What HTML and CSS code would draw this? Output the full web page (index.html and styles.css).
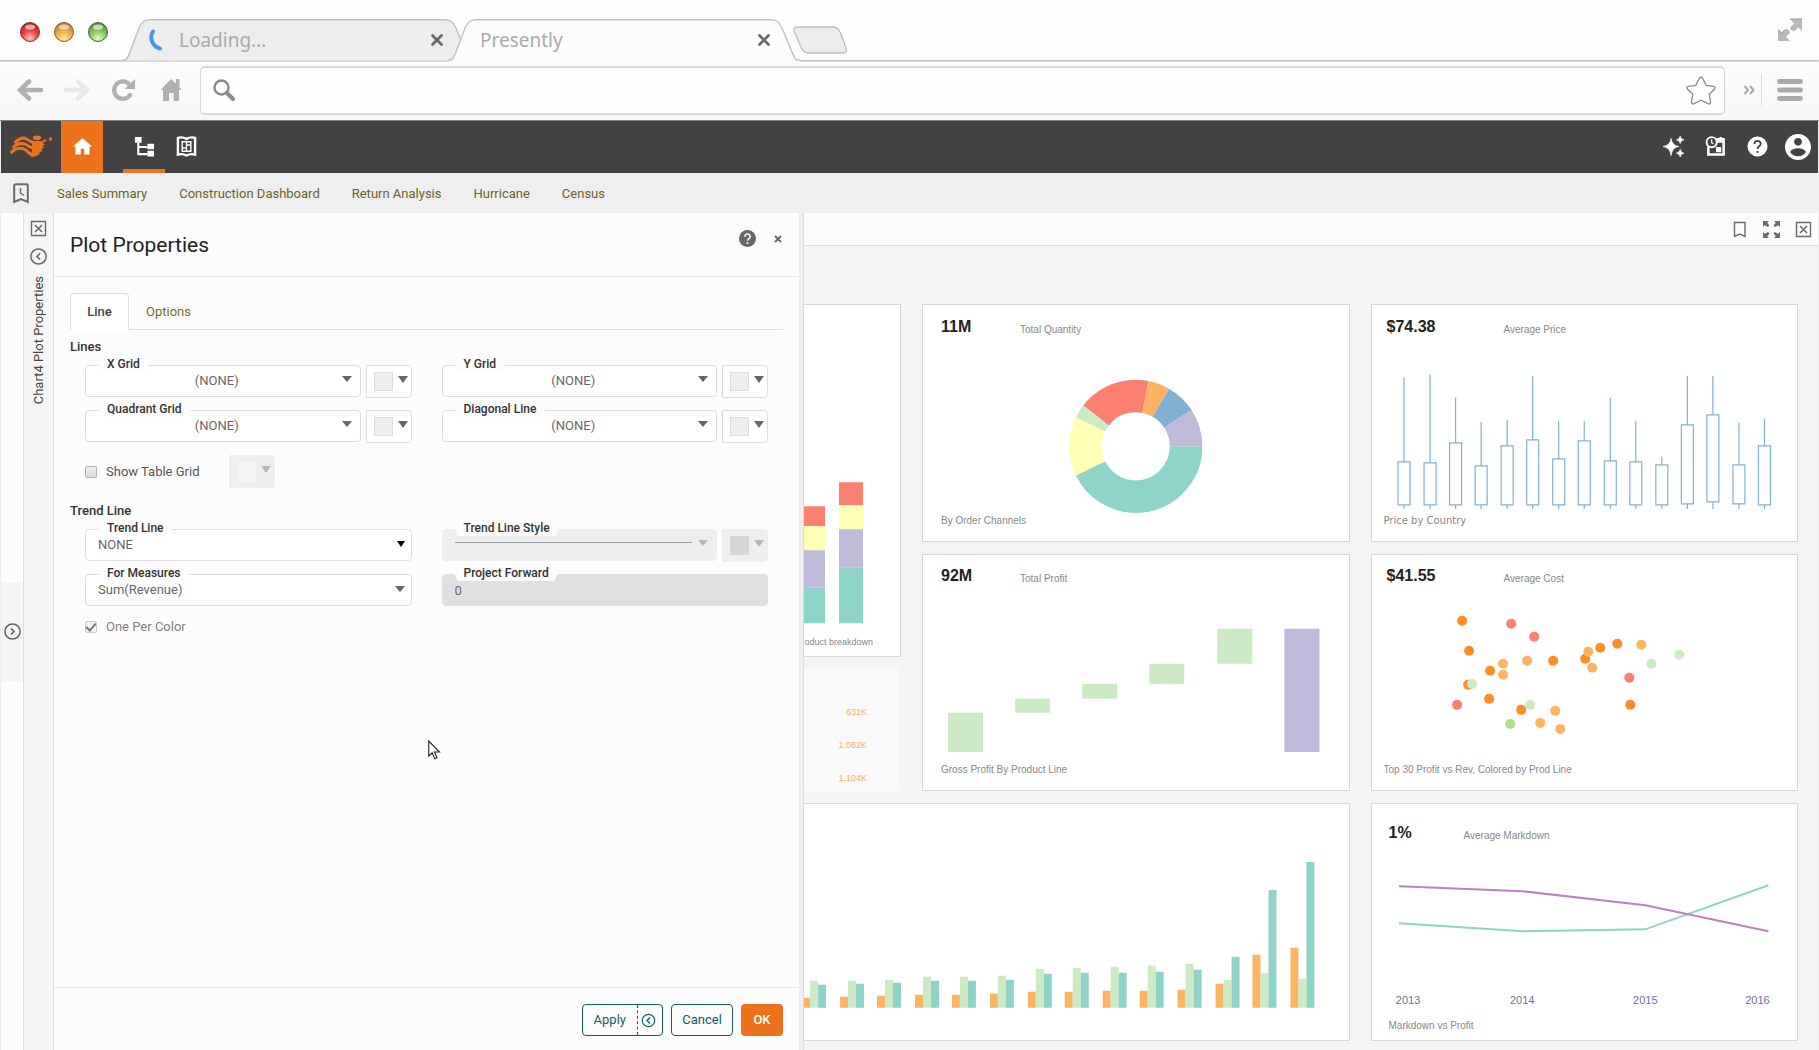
FILE: index.html
```html
<!DOCTYPE html>
<html lang="en">
<head>
<meta charset="utf-8">
<meta name="viewport" content="width=device-width, initial-scale=1">
<title>Presently</title>
<link rel="stylesheet" href="styles.css">
</head>
<body>
<div class="window">
  <header class="tabstrip">
    <div class="lights">
      <svg class="light" viewBox="0 0 20 20"><defs><radialGradient id="red" cx=".5" cy=".85" r=".8"><stop offset="0" stop-color="#ffc4bd"/><stop offset=".5" stop-color="#ee4a47"/><stop offset="1" stop-color="#b01c20"/></radialGradient></defs><circle cx="10" cy="10" r="9.5" fill="url(#red)" stroke="#7c3634"/><ellipse cx="10" cy="5" rx="5" ry="2.6" fill="#fff" opacity=".6"/></svg>
      <svg class="light" viewBox="0 0 20 20"><defs><radialGradient id="amber" cx=".5" cy=".85" r=".8"><stop offset="0" stop-color="#ffe9a6"/><stop offset=".5" stop-color="#f2b04e"/><stop offset="1" stop-color="#c07a20"/></radialGradient></defs><circle cx="10" cy="10" r="9.5" fill="url(#amber)" stroke="#8a6030"/><ellipse cx="10" cy="5" rx="5" ry="2.6" fill="#fff" opacity=".6"/></svg>
      <svg class="light" viewBox="0 0 20 20"><defs><radialGradient id="green" cx=".5" cy=".85" r=".8"><stop offset="0" stop-color="#dcffb8"/><stop offset=".5" stop-color="#8ccb62"/><stop offset="1" stop-color="#4c8c34"/></radialGradient></defs><circle cx="10" cy="10" r="9.5" fill="url(#green)" stroke="#46653a"/><ellipse cx="10" cy="5" rx="5" ry="2.6" fill="#fff" opacity=".6"/></svg>
    </div>
    <div class="browser-tab">
      <svg class="tab-shape" viewBox="0 0 352 43"><path d="M0 41.5C5 41.5 6 38 8 33L17 9C20 2 23 .7 29 .7H322C328 .7 331 2 334 9L344 33C346 38 347 41.5 352 41.5" fill="#ededed" stroke="#c0c0c0" stroke-width="1.4"/></svg>
      <svg class="spinner" viewBox="0 0 16 24"><path d="M5 3.500C1 10 4.500 18.500 12 20.500" fill="none" stroke="#4a96e6" stroke-width="4" stroke-linecap="round"/></svg>
      <span class="tab-title">Loading...</span>
      <button class="tab-close" aria-label="Close tab"><svg viewBox="0 0 12 12"><path d="M1.500 1.500l9 9m0-9l-9 9" stroke="#666" stroke-width="2.600" stroke-linecap="round"/></svg></button>
    </div>
    <div class="browser-tab current">
      <svg class="tab-shape" viewBox="0 0 352 43"><path d="M0 41.5C5 41.5 6 38 8 33L17 9C20 2 23 .7 29 .7H322C328 .7 331 2 334 9L344 33C346 38 347 41.5 352 41.5V43H0z" fill="#fcfcfc"/><path d="M0 41.5C5 41.5 6 38 8 33L17 9C20 2 23 .7 29 .7H322C328 .7 331 2 334 9L344 33C346 38 347 41.5 352 41.5" fill="none" stroke="#c0c0c0" stroke-width="1.4"/></svg>
      <span class="tab-title">Presently</span>
      <button class="tab-close" aria-label="Close tab"><svg viewBox="0 0 12 12"><path d="M1.500 1.500l9 9m0-9l-9 9" stroke="#666" stroke-width="2.600" stroke-linecap="round"/></svg></button>
    </div>
    <button class="new-tab" aria-label="New tab"><svg viewBox="0 0 54 28"><path d="M5 1H40C45 1 46 4 48 8L53 22C54 25 53 27 50 27H16C11 27 9 24 8 21L1 5C0 2 2 1 5 1Z" fill="#ededed" stroke="#bdbdbd" stroke-width="1.300"/></svg></button>
    <svg class="expand" viewBox="0 0 24 24"><path d="M13 1H24V13L20.500 9.500L16.500 13C14 13 12 11.500 12 9.500L16 5.500L12 1ZM11 23H0V11L3.500 14.500L7.500 11C10 11 12 12.500 12 15L8 18.500L12 23Z" fill="#b9b9b9"/><path d="M12 1H24M0 11.500L3.500 15L7.500 11.500" stroke="#999" fill="none"/></svg>
  </header>

  <div class="toolbar">
    <button class="tool" aria-label="Back"><svg viewBox="0 0 26 22"><path d="M24 11H4M12 2.500L3 11L12 19.500" fill="none" stroke="#b0b0b0" stroke-width="4.600" stroke-linecap="round"/></svg></button>
    <button class="tool" aria-label="Forward"><svg viewBox="0 0 26 22"><path d="M2 11H22M14 2.500L23 11L14 19.500" fill="none" stroke="#e8e8e8" stroke-width="4.600" stroke-linecap="round"/></svg></button>
    <button class="tool" aria-label="Reload"><svg viewBox="0 0 26 22"><path d="M19 16A8.700 8.700 0 1 1 18 5" fill="none" stroke="#b0b0b0" stroke-width="4.200" stroke-linecap="round"/><path d="M24 0V10H13.500Z" fill="#b0b0b0"/></svg></button>
    <button class="tool" aria-label="Home"><svg viewBox="0 0 26 22"><path d="M13 0L18 4.500V0H21.500V8L23.500 11H21V22H15.500V14H11V22H5V11H2.500Z" fill="#b0b0b0"/></svg></button>
    <div class="address">
      <svg class="search-icon" viewBox="0 0 22 22"><circle cx="8.500" cy="8.500" r="7" fill="none" stroke="#8a8a8a" stroke-width="2.400"/><path d="M14 14L20 20" stroke="#8a8a8a" stroke-width="4" stroke-linecap="round"/></svg>
      <input type="text" class="address-input" aria-label="Address">
      <button class="star" aria-label="Bookmark page"><svg viewBox="0 0 30 29"><path d="M13.200 2.500Q15 -.5 16.800 2.500L20.200 9.300L27.500 10.400Q30.200 11.200 28.400 13.200L23.200 18.200L24.500 25.500Q24.600 28.800 21.800 27.700L15 24.200L8.200 27.700Q5.400 28.800 5.500 25.500L6.800 18.200L1.600 13.200Q-.2 11.200 2.500 10.400L9.800 9.300Z" fill="#fff" stroke="#8a8a8a" stroke-width="1.300"/></svg></button>
    </div>
    <button class="more" aria-label="More"><svg viewBox="0 0 12 10"><path d="M1.500 1L5 5L1.500 9M7 1L10.500 5L7 9" fill="none" stroke="#aaa" stroke-width="2"/></svg></button>
    <button class="menu" aria-label="Menu"><svg viewBox="0 0 26 22"><path d="M2.500 2.500H23.500M2.500 11H23.500M2.500 19.500H23.500" stroke="#a9a9a9" stroke-width="4.800" stroke-linecap="round"/></svg></button>
  </div>

  <div class="app">
    <nav class="navbar">
      <svg class="logo" viewBox="0 0 42 22"><g fill="#ee711c"><ellipse cx="27" cy="2.700" rx="4.200" ry="2.300"/><circle cx="40.500" cy="4" r="1.700"/><path d="M36 4L31 6.500Q27 5 23 7L22 10V18L21 22Q27 21.500 30 18.500L29 17L32 16.500L31.500 13.500H34L33 11L35 9L32.500 8.500L36.500 5.500Z"/></g><path d="M4.500 8C9 3.500 13 2 16.500 4C20 6 21 8 26 8M2.500 13C7 8.500 12 7.500 16 9.500C19.500 11.500 21 14 26 13M.5 18C6 12.500 11 12.500 15 14.500C18.500 16.500 19 20 25 20" fill="none" stroke="#ee711c" stroke-width="3"/></svg>
      <a class="nav-item home" href="#" aria-label="Home"><svg viewBox="0 0 24 24"><path d="M10 21v-6.500h4V21h6v-9h3L12 2.500 1 12h3v9z" fill="#fff"/></svg></a>
      <a class="nav-item active" href="#" aria-label="Explorer"><svg viewBox="0 0 22 22"><path d="M1 1h7v6H1zM14 8h7v6h-7zM14 15.500h7v6h-7z" fill="#fff"/><path d="M4.500 7v12H14M4.500 11.500H14" fill="none" stroke="#fff" stroke-width="2.200"/></svg></a>
      <a class="nav-item" href="#" aria-label="Portal"><svg viewBox="0 0 22 22"><path d="M2 2Q6.500 .5 11 3Q15.500 .5 20 2V19.500Q15.500 18 11 20.500Q6.500 18 2 19.500Z" fill="none" stroke="#fff" stroke-width="2.500"/><path d="M6.500 6H15.500V16H6.500ZM11 5.500V16.500M6.500 12.500H11M11 9.500H15.500" fill="none" stroke="#fff" stroke-width="1.500"/></svg></a>
      <div class="nav-right">
        <a class="nav-item" href="#" aria-label="Assistant"><svg viewBox="0 0 22 22"><path d="M8.500 2.500Q9.500 10 16.500 11Q9.500 12 8.500 20.500Q7.500 12 0 11Q7.500 10 8.500 2.500ZM18 0Q18.500 3.500 22 4Q18.500 4.500 18 8Q17.500 4.500 14 4Q17.500 3.500 18 0ZM18 14Q18.500 17.500 22 18Q18.500 18.500 18 22Q17.500 18.500 14 18Q17.500 17.500 18 14Z" fill="#fff" stroke="#fff" stroke-width=".7"/></svg></a>
        <a class="nav-item" href="#" aria-label="Schedule"><svg viewBox="0 0 22 22"><path d="M3.500 11V19.500H19.500V3.500H11M16.500 1V5" fill="none" stroke="#fff" stroke-width="2.600"/><path d="M12 3H20V7H12ZM11.500 11.500H17V17H11.500Z" fill="#fff"/><circle cx="7" cy="6.500" r="5.300" fill="#424242" stroke="#fff" stroke-width="2"/><path d="M7 3.500V7L9 8.500" fill="none" stroke="#fff" stroke-width="1.300"/></svg></a>
        <a class="nav-item" href="#" aria-label="Help"><svg viewBox="0 0 22 22"><circle cx="11" cy="11" r="10.500" fill="#fff"/><path d="M7.800 8.300C7.800 4 14.300 4 14.300 8.300C14.300 10.800 11 10.800 11 13.600" fill="none" stroke="#424242" stroke-width="1.900"/><path d="M10 15.700h2v2h-2z" fill="#424242"/></svg></a>
        <a class="nav-item user" href="#" aria-label="Account"><svg viewBox="2 2 20 20"><path d="M12 2C6.500 2 2 6.500 2 12s4.500 10 10 10 10-4.500 10-10S17.500 2 12 2zm0 3c1.700 0 3 1.300 3 3s-1.300 3-3 3-3-1.300-3-3 1.300-3 3-3zm0 14.200c-2.500 0-4.700-1.300-6-3.200 0-2 4-3.100 6-3.100s6 1.100 6 3.100c-1.300 1.900-3.500 3.200-6 3.200z" fill="#fff"/></svg></a>
      </div>
    </nav>

    <nav class="bookmarks">
      <svg class="history" viewBox="0 0 16 21"><path d="M1.200 2.500Q1.200 1.200 2.500 1.200H13.500Q14.800 1.200 14.800 2.500V19L8 16.200L1.200 19Z" fill="none" stroke="#6a6a6a" stroke-width="2"/><path d="M7.500 5V10L11 12.500" fill="none" stroke="#6a6a6a" stroke-width="1.500"/></svg>
      <a href="#">Sales Summary</a>
      <a href="#">Construction Dashboard</a>
      <a href="#">Return Analysis</a>
      <a href="#">Hurricane</a>
      <a href="#">Census</a>
    </nav>

    <main class="workspace">
      <aside class="rail">
        <button class="rail-handle" aria-label="Expand"><svg viewBox="0 0 17 17"><circle cx="8.500" cy="8.500" r="7.600" fill="none" stroke="#666" stroke-width="1.500"/><path d="M7 5.500L10 8.500L7 11.500" fill="none" stroke="#666" stroke-width="1.700"/></svg></button>
      </aside>
      <aside class="dock">
        <button class="dock-btn" aria-label="Close"><svg viewBox="0 0 17 17"><path d="M1.500 1.500H15.500V15.500H1.500Z" fill="none" stroke="#6a6a6a" stroke-width="1.400"/><path d="M5 5L12 12M12 5L5 12" stroke="#6a6a6a" stroke-width="1.600"/></svg></button>
        <button class="dock-btn" aria-label="Collapse"><svg viewBox="0 0 17 17"><circle cx="8.500" cy="8.500" r="7.600" fill="none" stroke="#6a6a6a" stroke-width="1.500"/><path d="M10 5.500L7 8.500L10 11.500" fill="none" stroke="#6a6a6a" stroke-width="1.700"/></svg></button>
        <span class="dock-title">Chart4 Plot Properties</span>
      </aside>

      <section class="panel">
        <div class="panel-head">
          <h1>Plot Properties</h1>
          <button class="help" aria-label="Help"><svg viewBox="0 0 17 17"><circle cx="8.500" cy="8.500" r="8.500" fill="#666"/><path d="M5.900 6.700C5.900 3 11.200 3 11.200 6.700C11.200 8.500 8.500 8.600 8.500 10.800" fill="none" stroke="#fff" stroke-width="1.600"/><path d="M7.600 12.200h1.800v1.800H7.600z" fill="#fff"/></svg></button>
          <button class="close" aria-label="Close"><svg viewBox="0 0 8 8"><path d="M1 1L7 7M7 1L1 7" stroke="#666" stroke-width="1.800"/></svg></button>
        </div>
        <div class="panel-body">
          <div class="tabs">
            <button class="tab selected">Line</button>
            <button class="tab">Options</button>
          </div>

          <h2>Lines</h2>
          <div class="fields">
            <div class="pair">
              <div class="field centered"><label for="xgrid">X Grid</label><select id="xgrid"><option>(NONE)</option></select></div>
              <button class="color" aria-label="X grid color"><i class="swatch"></i></button>
            </div>
            <div class="pair">
              <div class="field centered"><label for="ygrid">Y Grid</label><select id="ygrid"><option>(NONE)</option></select></div>
              <button class="color" aria-label="Y grid color"><i class="swatch"></i></button>
            </div>
            <div class="pair">
              <div class="field centered"><label for="quadrant">Quadrant Grid</label><select id="quadrant"><option>(NONE)</option></select></div>
              <button class="color" aria-label="Quadrant grid color"><i class="swatch"></i></button>
            </div>
            <div class="pair">
              <div class="field centered"><label for="diagonal">Diagonal Line</label><select id="diagonal"><option>(NONE)</option></select></div>
              <button class="color" aria-label="Diagonal line color"><i class="swatch"></i></button>
            </div>
            <div class="pair">
              <label class="check"><input type="checkbox">Show Table Grid</label>
              <button class="color off" disabled aria-label="Table grid color"><i class="swatch"></i></button>
            </div>
          </div>

          <h2>Trend Line</h2>
          <div class="fields">
            <div class="field native"><label for="trend">Trend Line</label><select id="trend"><option>NONE</option></select></div>
            <div class="pair">
              <div class="field off"><label for="style">Trend Line Style</label><select id="style" disabled><option aria-label="Solid"></option></select><span class="stroke-sample"></span></div>
              <button class="color off dark" disabled aria-label="Trend line color"><i class="swatch"></i></button>
            </div>
            <div class="field"><label for="measures">For Measures</label><select id="measures"><option>Sum(Revenue)</option></select></div>
            <div class="field off plain"><label for="forward">Project Forward</label><input type="text" id="forward" value="0" disabled></div>
            <label class="check muted"><input type="checkbox" checked disabled>One Per Color</label>
          </div>
        </div>
        <footer class="panel-foot">
          <div class="split">
            <button class="btn">Apply</button>
            <button class="btn btn-icon" aria-label="Apply and collapse"><svg viewBox="0 0 17 17"><circle cx="8.500" cy="8.500" r="6.200" fill="none" stroke="#15605c" stroke-width="1.200"/><path d="M10 5.500L7 8.500L10 11.500" fill="none" stroke="#15605c" stroke-width="1.400"/></svg></button>
          </div>
          <button class="btn outlined">Cancel</button>
          <button class="btn primary">OK</button>
        </footer>
      </section>

      <section class="dash">
        <div class="dash-head">
          <button aria-label="Bookmark"><svg viewBox="0 0 17 17"><path d="M3.500 1.500H14V15.500L8.700 13L3.500 15.500Z" fill="none" stroke="#6a6a6a" stroke-width="1.400"/></svg></button>
          <button aria-label="Full screen"><svg viewBox="0 0 17 17"><path d="M0 0H6L4.200 1.800L6.500 4.500L5 6L1.800 4.200L0 6ZM17 0V6L15.200 4.200L12 6L10.500 4.500L12.800 1.800L11 0ZM0 17V11L1.800 12.800L5 11L6.500 12.500L4.200 15.200L6 17ZM17 17H11L12.800 15.200L10.500 12.500L12 11L15.200 12.800L17 11Z" fill="#6a6a6a"/></svg></button>
          <button aria-label="Close"><svg viewBox="0 0 17 17"><path d="M1.500 1.500H15.500V15.500H1.500Z" fill="none" stroke="#6a6a6a" stroke-width="1.400"/><path d="M5 5L12 12M12 5L5 12" stroke="#6a6a6a" stroke-width="1.600"/></svg></button>
        </div>
        <div class="cards">
          <div class="side">
            <article class="card cut stacked">
              <svg class="plot" viewBox="0 0 96 331">
                <path d="M0 201H21V221H0ZM35 177H59V200H35Z" fill="#fb8072"/>
                <path d="M0 221H21V245H0ZM35 200H59V224H35Z" fill="#ffffb3"/>
                <path d="M0 245H21V282H0ZM35 224H59V262H35Z" fill="#bebada"/>
                <path d="M0 282H21V318H0ZM35 262H59V318H35Z" fill="#8dd3c7"/>
              </svg>
              <p class="caption">Product breakdown</p>
            </article>
            <table class="totals">
              <tr><td>631K</td></tr>
              <tr><td>1,062K</td></tr>
              <tr><td>1,104K</td></tr>
            </table>
          </div>

          <article class="card">
            <div class="kpi"><strong>11M</strong><span>Total Quantity</span></div>
            <svg class="plot" viewBox="0 0 425 159">
              <g fill="none" stroke-width="32.500">
                <circle cx="212.500" cy="91.500" r="50.250" pathLength="360" stroke="#8dd3c7" stroke-dasharray="154 360"/>
                <circle cx="212.500" cy="91.500" r="50.250" pathLength="360" stroke="#ffffb3" stroke-dasharray="52 360" stroke-dashoffset="-154"/>
                <circle cx="212.500" cy="91.500" r="50.250" pathLength="360" stroke="#ccebc5" stroke-dasharray="12 360" stroke-dashoffset="-206"/>
                <circle cx="212.500" cy="91.500" r="50.250" pathLength="360" stroke="#fb8072" stroke-dasharray="63 360" stroke-dashoffset="-218"/>
                <circle cx="212.500" cy="91.500" r="50.250" pathLength="360" stroke="#fdb462" stroke-dasharray="19 360" stroke-dashoffset="-281"/>
                <circle cx="212.500" cy="91.500" r="50.250" pathLength="360" stroke="#80b1d3" stroke-dasharray="27 360" stroke-dashoffset="-300"/>
                <circle cx="212.500" cy="91.500" r="50.250" pathLength="360" stroke="#bebada" stroke-dasharray="33 360" stroke-dashoffset="-327"/>
              </g>
            </svg>
            <p class="caption">By Order Channels</p>
          </article>

          <article class="card right">
            <div class="kpi"><strong>$74.38</strong><span>Average Price</span></div>
            <svg class="plot" viewBox="0 0 425 159">
              <path fill="none" stroke="#80b1d3" stroke-width="1.200" d="M32 23V107M26 107h12V150h-12ZM32 150v4M58 20V108M52 108h12V150h-12ZM58 150v4M83.500 43V88M77.500 88h12V150h-12ZM83.500 150v4M109 67V111M103 111h12V150h-12ZM109 150v4M135 65V91M129 91h12V150h-12ZM135 150v4M160.500 21V85M154.500 85h12V150h-12ZM160.500 150v4M186.500 66V104M180.500 104h12V150h-12ZM186.500 150v4M212 66V86M206 86h12V150h-12ZM212 150v4M238 43V106M232 106h12V150h-12ZM238 150v4M263.500 66V107M257.500 107h12V150h-12ZM263.500 150v4M289.500 102V110M283.500 110h12V150h-12ZM289.500 150v4M315 21V70M309 70h12V149h-12ZM315 149v5M340.500 21V60M334.500 60h12V147h-12ZM340.500 147v7M366.500 68V110M360.500 110h12V149h-12ZM366.500 149v5M392 64V91M386 91h12V150h-12ZM392 150v4"/>
            </svg>
            <p class="caption wide">Price by Country</p>
          </article>

          <article class="card">
            <div class="kpi"><strong>92M</strong><span>Total Profit</span></div>
            <svg class="plot" viewBox="0 0 425 159">
              <path fill="#ccebc5" d="M25 108h35v39h-35zM92 94h35v14h-35zM159 79h35v15h-35zM226 59h35v20h-35zM294 24h35v35h-35z"/>
              <path fill="#bebada" d="M361 24h35v123h-35z"/>
            </svg>
            <p class="caption">Gross Profit By Product Line</p>
          </article>

          <article class="card right">
            <div class="kpi"><strong>$41.55</strong><span>Average Cost</span></div>
            <svg class="plot" viewBox="0 0 425 159">
              <g fill="#fd8d26"><circle cx="90" cy="16" r="5"/><circle cx="97" cy="46" r="5"/><circle cx="118" cy="66" r="5"/><circle cx="181" cy="56" r="5"/><circle cx="213" cy="54" r="5"/><circle cx="228" cy="43" r="5"/><circle cx="245" cy="39" r="5"/><circle cx="258" cy="100" r="5"/><circle cx="96" cy="80" r="5"/><circle cx="117" cy="94" r="5"/><circle cx="149" cy="105" r="5"/></g>
              <g fill="#fdb462"><circle cx="131" cy="59" r="5"/><circle cx="131" cy="70" r="5"/><circle cx="155" cy="56" r="5"/><circle cx="216" cy="47" r="5"/><circle cx="220" cy="63" r="5"/><circle cx="269" cy="40" r="5"/><circle cx="183" cy="106" r="5"/><circle cx="168" cy="118" r="5"/><circle cx="188" cy="124" r="5"/></g>
              <g fill="#fb8072"><circle cx="139" cy="19" r="5"/><circle cx="162" cy="32" r="5"/><circle cx="257" cy="73" r="5"/><circle cx="85" cy="100" r="5"/></g>
              <g fill="#ccebc5"><circle cx="307" cy="50" r="5"/><circle cx="279" cy="59" r="5"/><circle cx="100" cy="79" r="5"/><circle cx="158" cy="100" r="5"/></g>
              <circle cx="138" cy="119" r="5" fill="#b3de8e"/>
            </svg>
            <p class="caption">Top 30 Profit vs Rev, Colored by Prod Line</p>
          </article>

          <article class="card cut bars">
            <svg class="plot" viewBox="0 0 545 236">
              <path fill="#fdb462" d="M-2 204v-10h8v10zM36 204v-11h8v11zM73 204v-12h8v12zM111 204v-13h8v13zM148 204v-13h8v13zM186 204v-14h8v14zM224 204v-16h8v16zM261 204v-16h8v16zM299 204v-17h8v17zM336 204v-17h8v17zM374 204v-18h8v18zM412 204v-24h8v24zM449 204v-53h8v53zM487 204v-60h8v60z"/>
              <path fill="#ccebc5" d="M6 204v-27h8v27zM44 204v-27h8v27zM81 204v-28h8v28zM119 204v-31h8v31zM156 204v-31h8v31zM194 204v-32h8v32zM232 204v-39h8v39zM269 204v-40h8v40zM307 204v-41h8v41zM344 204v-42h8v42zM382 204v-44h8v44zM420 204v-28h8v28zM457 204v-35h8v35zM495 204v-29h8v29z"/>
              <path fill="#8dd3c7" d="M14 204v-23h8v23zM52 204v-24h8v24zM89 204v-25h8v25zM127 204v-27h8v27zM164 204v-27h8v27zM202 204v-28h8v28zM240 204v-34h8v34zM277 204v-35h8v35zM315 204v-35h8v35zM352 204v-36h8v36zM390 204v-38h8v38zM428 204v-51h8v51zM465 204v-118h8v118zM503 204v-146h8v146z"/>
            </svg>
          </article>

          <article class="card right low">
            <div class="kpi"><strong>1%</strong><span>Average Markdown</span></div>
            <svg class="plot" viewBox="0 0 425 166">
              <polyline points="27,70 151,78 273,76 396,32" fill="none" stroke="#8dd3c7" stroke-width="2"/>
              <polyline points="27,33 151,38 273,52 396,78" fill="none" stroke="#bc80bd" stroke-width="2"/>
              <g class="axis"><text x="36" y="151">2013</text><text x="150" y="151">2014</text><text x="273" y="151">2015</text><text x="385" y="151">2016</text></g>
            </svg>
            <p class="caption">Markdown vs Profit</p>
          </article>
        </div>
      </section>
    </main>
  </div>
  <svg class="cursor" viewBox="0 0 13 20"><path d="M.7 1V16L4.200 12.800L6.700 18.700L9 17.700L6.500 12H11.500Z" fill="#fff" stroke="#222" stroke-width="1.100"/></svg>
</div>
</body>
</html>
```
FILE: styles.css
```css
* { box-sizing: border-box; }

body {
  margin: 0;
  background: #fff;
  color: #666;
  font: 13px/18px Roboto, "Liberation Sans", sans-serif;
}

button {
  display: flex;
  align-items: center;
  justify-content: center;
  margin: 0;
  padding: 0;
  border: 0;
  background: none;
  color: inherit;
  font: inherit;
}

svg { display: block; }
a { text-decoration: none; }
h1, h2, p { margin: 0; }

.window {
  display: flex;
  flex-direction: column;
  min-height: 100vh;
  position: relative;
}

/* Browser tab strip */
.tabstrip {
  display: flex;
  align-items: flex-end;
  height: 62px;
  padding-left: 20px;
  background: linear-gradient(#c6c6c6, #dcdcdc) bottom / 100% 2px no-repeat #fefefe;
}

.lights {
  display: flex;
  gap: 14px;
  width: 102px;
  padding-bottom: 20px;
}

.light { width: 20px; height: 20px; }

.browser-tab {
  display: flex;
  align-items: center;
  position: relative;
  width: 352px;
  height: 43px;
  padding: 0 31px 2px 26px;
}

.browser-tab.current {
  z-index: 1;
  margin-left: -26px;
  padding: 0 30px 2px 32px;
}

.tab-shape { position: absolute; inset: 0; width: 100%; height: 100%; }
.spinner { position: relative; width: 16px; height: 24px; margin-right: 15px; }

.tab-title {
  position: relative;
  flex: 1;
  color: #aaa;
  font: 19px/24px "Noto Sans", "Open Sans", sans-serif;
}

.tab-close { position: relative; width: 12px; height: 12px; }
.tab-close svg { width: 12px; height: 12px; }
.new-tab { width: 54px; height: 28px; margin: 0 0 8px -7px; position: relative; z-index: 1; }
.new-tab svg { width: 54px; height: 28px; }
.expand { width: 24px; height: 24px; margin: 0 17px 20px auto; }

/* Browser toolbar */
.toolbar {
  display: flex;
  align-items: center;
  height: 59px;
  padding: 0 16px 2px;
  border-bottom: 1px solid #858585;
  background: linear-gradient(#fcfcfc, #f6f6f6);
}

.tool { width: 28px; margin-right: 19px; }
.tool svg { width: 26px; height: 22px; }

.address {
  display: flex;
  align-items: center;
  flex: 1;
  height: 49px;
  margin-left: -4px;
  padding: 0 8px 0 12px;
  border: 1px solid #d8d8d8;
  border-width: 2px 1px;
  border-radius: 5px;
  background: #fefefe;
}

.search-icon { width: 22px; height: 22px; }
.address-input { flex: 1; margin: 0 12px; border: 0; outline: 0; background: none; font: inherit; }
.star svg { width: 30px; height: 29px; }

.more {
  width: 37px;
  height: 32px;
  padding-left: 12px;
  border-right: 1px solid #ddd;
}

.more svg { width: 12px; height: 10px; }
.menu { padding-left: 15px; }
.menu svg { width: 26px; height: 22px; }

/* Application header */
.app {
  display: flex;
  flex-direction: column;
  flex: 1;
  padding: 0 1px;
  background: #eee;
}

.navbar {
  display: flex;
  height: 52px;
  background: #424242;
}

.logo { width: 42px; height: 22px; margin: 14px 9px; }

.nav-item {
  display: flex;
  align-items: center;
  justify-content: center;
  width: 42px;
  padding-bottom: 1px;
  border-top: 4px solid transparent;
  border-bottom: 4px solid transparent;
}

.nav-item svg { width: 21px; height: 21px; }
.nav-item.home { margin-right: 20px; border-color: #ee711c; background: #ee711c; }
.nav-item.active { border-bottom-color: #ee711c; }
.nav-item.user { width: 40px; }
.nav-item.user svg { width: 26px; height: 26px; }
.nav-right { display: flex; margin-left: auto; }

.bookmarks {
  display: flex;
  align-items: center;
  gap: 32px;
  height: 40px;
  padding-left: 12px;
  background: #efefef;
}

.bookmarks a { padding-top: 2px; color: #6a6326; }
.history { width: 16px; height: 21px; margin-right: -4px; }

/* Workspace columns */
.workspace { display: flex; flex: 1; background: #fcfcfc; }

.rail {
  display: flex;
  align-items: center;
  width: 23px;
  border-right: 1px solid #ddd;
}

.rail-handle { width: 22px; height: 98px; background: #f5f5f5; }
.rail-handle svg { width: 17px; height: 17px; }

.dock {
  display: flex;
  flex-direction: column;
  align-items: center;
  gap: 11px;
  width: 30px;
  padding-top: 7px;
  border-right: 1px solid #ddd;
  background: #f5f5f5;
}

.dock-btn svg { width: 17px; height: 17px; }
.dock-title { color: #444; writing-mode: vertical-rl; transform: rotate(180deg); }

/* Plot properties panel */
.panel {
  display: flex;
  flex-direction: column;
  width: 745px;
}

.panel-head {
  display: flex;
  align-items: center;
  height: 64px;
  padding: 0 17px 0 16px;
  border-bottom: 1px solid #e8e8e8;
}

.panel-head h1 { flex: 1; color: #222; font-size: 21px; font-weight: 400; line-height: 28px; }
.help, .close { margin-bottom: 12px; }
.help svg { width: 17px; height: 17px; }
.close { margin-left: 18px; }
.close svg { width: 8px; height: 8px; }
.panel-body { flex: 1; padding: 16px 16px 0; }

.tabs { display: flex; border-bottom: 1px solid #ddd; }

.tab {
  height: 37px;
  margin-bottom: -1px;
  padding: 0 17px;
  color: #7a6c24;
}

.tab.selected {
  width: 59px;
  border: 1px solid #ddd;
  border-bottom: 0;
  border-radius: 4px 4px 0 0;
  background: #fff;
  color: #444;
  font-weight: 500;
}

h2 { margin: 8px 0 9px; color: #333; font-size: 13px; font-weight: 500; line-height: 18px; }
h2:not(:first-of-type) { margin-top: 14px; }

.fields {
  display: grid;
  grid-template-columns: 1fr 1fr;
  gap: 12px 30px;
  padding: 0 15px;
}

.pair { display: flex; gap: 5px; }
.field { position: relative; flex: 1; height: 32px; }

.field label {
  position: absolute;
  top: -8px;
  left: 10px;
  z-index: 1;
  padding: 0 12px;
  background: #fcfcfc;
  clip-path: polygon(0 0, 100% 0, calc(100% - 6px) 100%, 6px 100%);
  color: #333;
  font-size: 12px;
  font-weight: 500;
  line-height: 15px;
}

.field select,
.field input {
  width: 100%;
  height: 32px;
  padding: 0 12px;
  border: 1px solid #ddd;
  border-radius: 4px;
  background: #fff;
  color: #666;
  font: inherit;
  appearance: none;
  opacity: 1;
}

.centered select { padding-right: 24px; text-align: center; text-align-last: center; }

/* Drop-down triangle */
.field::after,
.color::after {
  content: "";
  position: absolute;
  top: 11px;
  right: 9px;
  border: 5px solid transparent;
  border-top: 6px solid #666;
  border-bottom: 0;
  pointer-events: none;
}

.fields > .field::after { top: 12px; right: 7px; }
.fields > .native::after { border-width: 6px 4px 0; border-top-color: #000; }
.off::after { border-top-color: #b8b8b8; }
.plain::after { display: none; }
.field.off select { border-color: #eee; background: #eee; }
.field.off input { border-color: #e0e0e0; background: #e0e0e0; }

.stroke-sample {
  position: absolute;
  top: 13px;
  left: 13px;
  right: 25px;
  height: 1px;
  background: #999fa3;
}

.color {
  justify-content: flex-start;
  position: relative;
  width: 46px;
  height: 33px;
  padding-left: 7px;
  border: 1px solid #ddd;
  border-radius: 0 4px 4px 0;
  background: #fff;
}

.color::after { top: 10px; right: 3px; border-top-width: 7px; }
.swatch { width: 19px; height: 19px; border: 1px solid #ddd; background: #eee; }
.color.off { border-color: #eee; background: #eee; }
.color.off::after { border-top-color: #b8b8b8; }
.color.off .swatch { border-color: #f4f4f4; background: #f4f4f4; }
.color.dark .swatch { border-color: #d6d6d4; background: #d6d6d4; }

.check { display: flex; align-items: center; gap: 9px; color: #555; }
.pair .check { width: 139px; }
.check.muted { color: #808080; }

.check input {
  display: grid;
  place-items: center;
  width: 12px;
  height: 12px;
  margin: 0;
  border: 1px solid #b4b4b4;
  border-radius: 2px;
  background: linear-gradient(#eee, #dcdcdc);
  appearance: none;
}

.check input:disabled { border-color: #ccc; background: #f0f0f0; }

.check input:checked::before {
  content: "";
  width: 8px;
  height: 4px;
  margin-top: -2px;
  border: solid #777;
  border-width: 0 0 2px 2px;
  transform: rotate(-48deg);
}

.panel-foot {
  display: flex;
  justify-content: flex-end;
  gap: 8px;
  padding: 16px 16px 14px;
  border-top: 1px solid #e8e8e8;
}

.btn { height: 32px; padding: 0 11px; color: #15605c; }
.split, .outlined { border: 1px solid #15605c; border-radius: 4px; }
.split { display: flex; height: 32px; }
.split .btn { height: 30px; }
.split .btn-icon { width: 25px; padding: 0 3px 0 0; border-left: 1px dashed #15605c; }
.btn-icon svg { width: 17px; height: 17px; }
.outlined { width: 62px; }
.primary { width: 42px; border-radius: 4px; background: #ee711c; color: #fff; font-weight: 500; }

/* Dashboard */
.dash {
  display: flex;
  flex-direction: column;
  flex: 1;
  min-width: 0;
  border-left: 4px solid #eee;
  background: #f4f4f4;
}

.dash-head {
  display: flex;
  align-items: center;
  justify-content: flex-end;
  gap: 15px;
  height: 33px;
  padding-right: 6px;
  border-bottom: 1px solid #ddd;
  border-left: 1px solid #ddd;
  background: #fcfcfc;
}

.dash-head svg { width: 17px; height: 17px; }

.cards {
  display: grid;
  grid-template-columns: 97px 1fr 1fr;
  grid-template-rows: repeat(3, minmax(230px, 1fr));
  gap: 12px 21px;
  flex: 1;
  padding: 58px 20px 9px 0;
  border-left: 1px solid #ddd;
}

.side {
  display: flex;
  flex-direction: column;
  grid-row: span 2;
  gap: 12px;
}

.card {
  display: flex;
  flex-direction: column;
  overflow: hidden;
  border: 1px solid #d8d8d8;
  background: #fff;
  font: 10px/12px "Liberation Sans", Arial, sans-serif;
}

.card.cut { border-left: 0; }
.bars { grid-column: span 2; }

.kpi {
  display: flex;
  align-items: center;
  height: 49px;
  padding: 0 18px 6px;
}

.kpi strong { width: 79px; color: #222; font-size: 16px; line-height: 20px; }
.kpi span { padding-top: 6px; color: #888; }
.right .kpi { padding-left: 15px; }
.right .kpi strong { width: 117px; }
.low .kpi { padding: 8px 0 0 17px; }
.low .kpi strong { width: 75px; }

.plot { flex: 1 1 0; width: 100%; height: 0; min-height: 0; }
.caption { padding: 0 18px; margin-bottom: 14px; color: #888; }
.right .caption { padding: 0 12px; }
.low .caption { padding: 0 17px; margin-bottom: 8px; }
.caption.wide { font-family: "DejaVu Sans", sans-serif; }
.axis text { fill: #6d6fa8; font-size: 11px; text-anchor: middle; }

.stacked { flex: 1; }
.stacked .caption { display: flex; justify-content: flex-end; padding: 0 27px 0 0; margin-bottom: 8px; font-size: 9px; white-space: nowrap; }

.totals {
  width: 95px;
  padding: 16px 32px 7px 0;
  border-spacing: 0;
  background: #f9f9f9;
  color: #fdae5a;
  font: 9px/12px "Liberation Sans", Arial, sans-serif;
  text-align: right;
}

.totals td { height: 33px; padding: 0; vertical-align: bottom; }

/* Mouse pointer lying over the page */
.cursor { position: absolute; top: 740px; left: 428px; width: 13px; height: 20px; }
```
